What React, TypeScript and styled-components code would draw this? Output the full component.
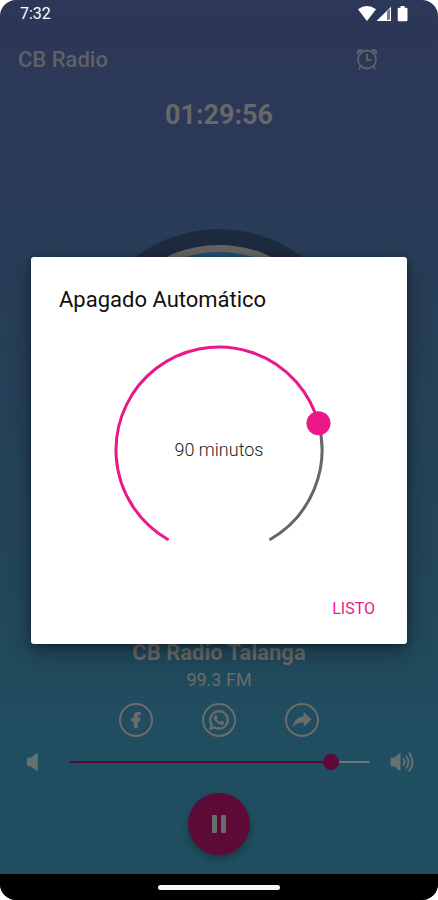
import React, { useState } from "react";
import styled, { createGlobalStyle } from "styled-components";
import { FaFacebookF, FaWhatsapp } from "react-icons/fa";
import { IoMdShareAlt } from "react-icons/io";

const GlobalStyle = createGlobalStyle`
  * { box-sizing: border-box; }
  body {
    margin: 0;
    background: #fff;
    font-family: Roboto, sans-serif;
  }
  button { font: inherit; cursor: pointer; }
  h1, h2, p { margin: 0; }
`;

const pink = "#ea1889";
const dimPink = "#5e0a37";
const dimText = "#6b6c6c";

const Screen = styled.div`
  position: relative;
  min-height: 100vh;
  display: flex;
  flex-direction: column;
  overflow: hidden;
  border-radius: 16px;
  background: linear-gradient(#2d3759 0%, #2b3957 14%, #283d57 28%, #234559 62%, #204e60 82%, #1f5061 100%);
`;

const StatusBar = styled.header`
  display: flex;
  align-items: center;
  justify-content: space-between;
  height: 28px;
  padding: 0 28px 0 20px;
  color: #fff;
  font-size: 16px;
  line-height: 28px;
`;

const StatusIcons = styled.svg`
  width: 52px;
  height: 16px;
`;

const AppBar = styled.div`
  display: flex;
  align-items: center;
  justify-content: space-between;
  height: 64px;
  padding: 0 60px 0 18px;
  color: #5f6264;
`;

const AppTitle = styled.h1`
  font-size: 22px;
  line-height: 28px;
  font-weight: 500;
`;

const IconButton = styled.button`
  display: flex;
  padding: 0;
  border: 0;
  background: none;
  color: inherit;
`;

const Countdown = styled.time`
  align-self: center;
  margin-top: 7px;
  color: #666869;
  font-size: 27px;
  line-height: 32px;
  font-weight: 700;
`;

const Artwork = styled.div`
  align-self: center;
  flex: none;
  width: 276px;
  height: 276px;
  margin: 98px 0 134px;
  padding: 16px;
  border-radius: 50%;
  background: #1d2b3f;
`;

const Cover = styled.div`
  height: 100%;
  border: 7px solid #666563;
  border-radius: 50%;
  background: #1f4f70;
`;

const Station = styled.section`
  display: flex;
  flex-direction: column;
  align-items: center;
  color: ${dimText};
`;

const StationName = styled.h2`
  font-size: 22px;
  line-height: 28px;
  font-weight: 700;
`;

const Frequency = styled.p`
  font-size: 18px;
  line-height: 26px;
`;

const Social = styled.nav`
  display: flex;
  justify-content: center;
  gap: 49px;
  margin-top: 10px;
`;

const SocialLink = styled.a<{ $size: number; $stroke?: number }>`
  display: flex;
  align-items: center;
  justify-content: center;
  width: 34px;
  height: 34px;
  border: 2px solid ${dimText};
  border-radius: 50%;
  color: ${dimText};
  font-size: ${(p) => p.$size}px;

  svg {
    stroke: currentColor;
    stroke-width: ${(p) => p.$stroke ?? 0}px;
  }
`;

const VolumeRow = styled.div`
  display: flex;
  align-items: center;
  height: 24px;
  margin-top: 13px;
  padding: 0 22px 0 24px;
  color: #667072;
`;

const VolumeIcon = styled.svg`
  flex: none;
  width: 26px;
  height: 24px;
`;

const VolumeSlider = styled.input`
  flex: 1;
  min-width: 0;
  height: 24px;
  margin: 0 20px 0 19px;
  appearance: none;
  background: transparent;

  &::-webkit-slider-runnable-track {
    height: 2px;
    border-radius: 1px;
    background: linear-gradient(to right, ${dimPink} var(--level), #687579 var(--level));
  }
  &::-webkit-slider-thumb {
    appearance: none;
    width: 16px;
    height: 16px;
    margin-top: -7px;
    border-radius: 50%;
    background: ${dimPink};
  }
`;

const PauseButton = styled.button`
  align-self: center;
  display: flex;
  align-items: center;
  justify-content: center;
  width: 62px;
  height: 62px;
  margin: 19px 0 18px;
  padding: 0;
  border: 0;
  border-radius: 50%;
  background: ${dimPink};
  box-shadow: 0 4px 8px rgba(0, 0, 0, 0.3);
  color: ${dimText};
`;

const SystemBar = styled.footer`
  display: flex;
  align-items: center;
  justify-content: center;
  height: 26px;
  margin-top: auto;
  background: #000;
`;

const HomeHandle = styled.div`
  width: 122px;
  height: 5px;
  border-radius: 3px;
  background: #f8f6f8;
`;

const DialogLayer = styled.div`
  position: absolute;
  inset: 0;
  display: flex;
  align-items: center;
  justify-content: center;
  padding: 0 31px;
`;

const Dialog = styled.section`
  display: flex;
  flex-direction: column;
  width: 100%;
  max-width: 420px;
  padding: 28px 28px 20px;
  border-radius: 3px;
  background: #fff;
  box-shadow: 0 8px 24px rgba(0, 0, 0, 0.35), 0 2px 6px rgba(0, 0, 0, 0.3);
`;

const DialogTitle = styled.h2`
  color: #101010;
  font-size: 22px;
  line-height: 30px;
  font-weight: 400;
`;

const Dial = styled.div`
  display: grid;
  place-items: center;
  align-self: center;
  margin-top: 20px;
  width: 230px;
  height: 230px;

  & > * { grid-area: 1 / 1; }
`;

const DialInput = styled.input`
  width: 100%;
  height: 100%;
  margin: 0;
  opacity: 0;
  cursor: pointer;
`;

const DialValue = styled.output`
  color: #222;
  font-size: 18px;
  line-height: 24px;
  font-weight: 300;
`;

const DialogActions = styled.div`
  display: flex;
  justify-content: flex-end;
  margin-top: 29px;
`;

const TextButton = styled.button`
  padding: 0 4px;
  border: 0;
  background: none;
  color: ${pink};
  font-size: 16px;
  line-height: 30px;
`;

const RADIUS = 103;
const START = 120;
const SWEEP = 300;

function point(angle: number) {
  const rad = (angle * Math.PI) / 180;
  return { x: 115 + RADIUS * Math.cos(rad), y: 115 + RADIUS * Math.sin(rad) };
}

function arc(from: number, to: number) {
  const a = point(from);
  const b = point(to);
  return `M${a.x} ${a.y}A${RADIUS} ${RADIUS} 0 ${to - from > 180 ? 1 : 0} 1 ${b.x} ${b.y}`;
}

function TimerDial({ minutes, onChange }: { minutes: number; onChange: (m: number) => void }) {
  const angle = START + (minutes / 120) * SWEEP;
  const knob = point(angle);
  return (
    <Dial>
      <svg width="230" height="230" viewBox="0 0 230 230" fill="none" strokeWidth="3" strokeLinecap="round" aria-hidden="true">
        <path d={arc(angle, START + SWEEP)} stroke="#666" />
        <path d={arc(START, angle)} stroke={pink} />
        <circle cx={knob.x} cy={knob.y} r="12" fill={pink} />
      </svg>
      <DialValue htmlFor="timer">{minutes} minutos</DialValue>
      <DialInput
        id="timer"
        type="range"
        min={0}
        max={120}
        value={minutes}
        aria-label="Minutos"
        onChange={(e) => onChange(Number(e.target.value))}
      />
    </Dial>
  );
}

function AlarmIcon() {
  return (
    <svg width="22" height="24" viewBox="0 0 22 24" fill="none" stroke="currentColor" strokeWidth="1.8" strokeLinecap="round" aria-hidden="true">
      <circle cx="11" cy="11.5" r="9" />
      <path d="M11 6.5v5.500h3.500M4.200 18.500l-1 2.500M17.800 18.500l1 2.500" />
      <path d="M1.800 5C2 3 3.600 2 5.400 2.400M20.200 5C20 3 18.400 2 16.600 2.400" strokeWidth="2.400" />
    </svg>
  );
}

export default function App() {
  const [volume, setVolume] = useState(89);
  const [minutes, setMinutes] = useState(90);
  const [open, setOpen] = useState(true);

  return (
    <>
      <GlobalStyle />
      <Screen>
        <StatusBar>
          <time>7:32</time>
          <StatusIcons viewBox="0 0 52 16" fill="#fff" aria-hidden="true">
            <path d="M0 3.2Q9 -3.2 18 3.2L9 15Z" />
            <path d="M18.5 15L33 0.8V15Z" fill="#fff" />
            <path d="M29 5.2L32 2.4V13.8H29Z" fill="#77798f" />
            <path d="M42.6 0h4v1.8h1.6q1.3 0 1.3 1.3V14q0 1.3-1.3 1.3H41q-1.3 0-1.3-1.3V3.1q0-1.3 1.3-1.3h1.6Z" />
          </StatusIcons>
        </StatusBar>

        <AppBar>
          <AppTitle>CB Radio</AppTitle>
          <IconButton aria-label="Apagado automático" onClick={() => setOpen(true)}>
            <AlarmIcon />
          </IconButton>
        </AppBar>

        <Countdown>01:29:56</Countdown>
        <Artwork>
          <Cover />
        </Artwork>

        <Station>
          <StationName>CB Radio Talanga</StationName>
          <Frequency>99.3 FM</Frequency>
        </Station>

        <Social>
          <SocialLink $size={16} $stroke={30} href="#facebook" aria-label="Facebook"><FaFacebookF /></SocialLink>
          <SocialLink $size={22} $stroke={20} href="#whatsapp" aria-label="WhatsApp"><FaWhatsapp /></SocialLink>
          <SocialLink $size={26} href="#compartir" aria-label="Compartir"><IoMdShareAlt /></SocialLink>
        </Social>

        <VolumeRow>
          <VolumeIcon viewBox="0 0 26 24" fill="currentColor" aria-hidden="true">
            <path d="M5 7.5h1.8L13.8 2.6V21.4L6.8 16.5H5Q3 16.5 3 14.5V9.5Q3 7.5 5 7.5Z" />
          </VolumeIcon>
          <VolumeSlider
            type="range"
            min={0}
            max={100}
            value={volume}
            aria-label="Volumen"
            style={{ "--level": `${volume}%` } as React.CSSProperties}
            onChange={(e) => setVolume(Number(e.target.value))}
          />
          <VolumeIcon viewBox="0 0 26 24" fill="currentColor" aria-hidden="true">
            <path d="M2 7.5H4.5L10.5 2.6V21.4L4.5 16.5H2Q0.5 16.5 0.5 15V9Q0.5 7.5 2 7.5Z" />
            <path
              d="M13.5 9.2Q15.5 12 13.5 14.8M16.5 6.2Q20.5 12 16.5 17.8M19.5 3.4Q25.5 12 19.5 20.6"
              fill="none"
              stroke="currentColor"
              strokeWidth="2"
              strokeLinecap="round"
            />
          </VolumeIcon>
        </VolumeRow>

        <PauseButton aria-label="Pausa">
          <svg width="14" height="18" viewBox="0 0 14 18" fill="currentColor" aria-hidden="true">
            <rect width="5" height="18" rx="1" />
            <rect x="9" width="5" height="18" rx="1" />
          </svg>
        </PauseButton>

        <SystemBar>
          <HomeHandle />
        </SystemBar>

        {open && (
          <DialogLayer>
            <Dialog role="dialog" aria-modal="true" aria-labelledby="timer-title">
              <DialogTitle id="timer-title">Apagado Automático</DialogTitle>
              <TimerDial minutes={minutes} onChange={setMinutes} />
              <DialogActions>
                <TextButton onClick={() => setOpen(false)}>LISTO</TextButton>
              </DialogActions>
            </Dialog>
          </DialogLayer>
        )}
      </Screen>
    </>
  );
}
